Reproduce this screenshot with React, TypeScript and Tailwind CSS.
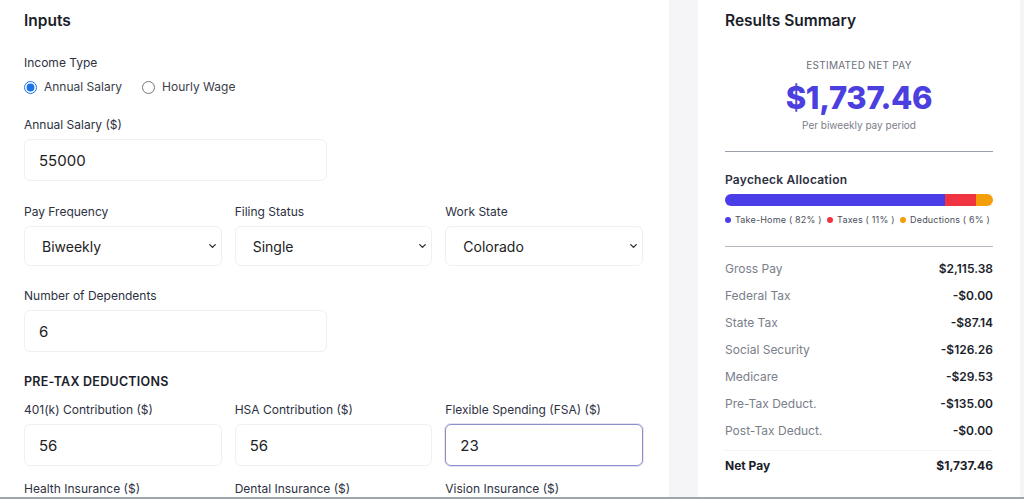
import React, { useState } from 'react';
import { ChevronDown } from 'lucide-react';

const font = { fontFamily: 'Inter, "Noto Sans", sans-serif' };

function Field({ label, value, focused }: { label: string; value: string; focused?: boolean }) {
  return (
    <div className="flex flex-col">
      <label className="text-[12px] text-[#2d3142] mb-[6px] leading-4">{label}</label>
      <input
        defaultValue={value}
        className={
          'h-[42px] rounded-md px-[14px] text-[15px] text-[#222] bg-white outline-none ' +
          (focused
            ? 'border border-[#8f8fcc] shadow-[0_0_0_1px_rgba(143,143,204,0.25)]'
            : 'border border-[#eef0f4]')
        }
      />
    </div>
  );
}

function SelectField({ label, value, options }: { label: string; value: string; options: string[] }) {
  return (
    <div className="flex flex-col">
      <label className="text-[12px] text-[#2d3142] mb-[6px] leading-4">{label}</label>
      <div className="relative">
        <select
          defaultValue={value}
          className="appearance-none w-full h-[40px] rounded-md border border-[#eef0f4] bg-white pl-[17px] pr-8 text-[14px] text-[#222] outline-none"
        >
          {options.map((o) => (
            <option key={o}>{o}</option>
          ))}
        </select>
        <ChevronDown className="absolute right-[4px] top-1/2 -translate-y-1/2 h-[11px] w-[11px] text-[#333] pointer-events-none" strokeWidth={3} />
      </div>
    </div>
  );
}

const rows = [
  ['Gross Pay', '$2,115.38'],
  ['Federal Tax', '-$0.00'],
  ['State Tax', '-$87.14'],
  ['Social Security', '-$126.26'],
  ['Medicare', '-$29.53'],
  ['Pre-Tax Deduct.', '-$135.00'],
  ['Post-Tax Deduct.', '-$0.00'],
];

export default function App() {
  const [income, setIncome] = useState('annual');

  return (
    <div style={font} className="h-[499px] w-[1024px] overflow-hidden bg-[#f5f5f7] flex border-b-2 border-[#a0a4ab]">
      {/* Inputs panel */}
      <div className="w-[669px] bg-white pl-6 pr-[26px] pt-[11px] shrink-0">
        <h2 className="text-[15.5px] font-semibold text-[#1b1e2b] leading-5">Inputs</h2>

        <div className="mt-[24px]">
          <div className="text-[12px] text-[#2d3142] leading-4">Income Type</div>
          <div className="flex items-center gap-[20px] mt-[7px]">
            <label className="flex items-center gap-[7px] text-[12px] text-[#3a3d4a]">
              <input
                type="radio"
                name="income"
                checked={income === 'annual'}
                onChange={() => setIncome('annual')}
                className="h-[13px] w-[13px] m-0 accent-[#1a73e8]"
              />
              Annual Salary
            </label>
            <label className="flex items-center gap-[7px] text-[12px] text-[#3a3d4a]">
              <input
                type="radio"
                name="income"
                checked={income === 'hourly'}
                onChange={() => setIncome('hourly')}
                className="h-[13px] w-[13px] m-0 accent-[#1a73e8]"
              />
              Hourly Wage
            </label>
          </div>
        </div>

        <div className="mt-[21px] grid grid-cols-2 gap-x-[13px]">
          <Field label="Annual Salary ($)" value="55000" />
        </div>

        <div className="mt-[23px] grid grid-cols-3 gap-x-[13px]">
          <SelectField label="Pay Frequency" value="Biweekly" options={['Weekly', 'Biweekly', 'Semi-monthly', 'Monthly']} />
          <SelectField label="Filing Status" value="Single" options={['Single', 'Married Filing Jointly', 'Head of Household']} />
          <SelectField label="Work State" value="Colorado" options={['California', 'Colorado', 'Texas', 'New York']} />
        </div>

        <div className="mt-[22px] grid grid-cols-2 gap-x-[13px]">
          <Field label="Number of Dependents" value="6" />
        </div>

        <div className="mt-[22px] text-[12.5px] font-semibold text-[#1b1e2b] tracking-[0.02em] leading-4">PRE-TAX DEDUCTIONS</div>

        <div className="mt-[12px] grid grid-cols-3 gap-x-[13px]">
          <Field label="401(k) Contribution ($)" value="56" />
          <Field label="HSA Contribution ($)" value="56" />
          <Field label="Flexible Spending (FSA) ($)" value="23" focused />
        </div>

        <div className="mt-[15px] grid grid-cols-3 gap-x-[13px]">
          <Field label="Health Insurance ($)" value="" />
          <Field label="Dental Insurance ($)" value="" />
          <Field label="Vision Insurance ($)" value="" />
        </div>
      </div>

      {/* Results panel */}
      <div className="ml-[29px] w-[322px] shrink-0 bg-white pl-[27px] pr-[27px] pt-[11px]">
        <h2 className="text-[15.5px] font-semibold text-[#1b1e2b] leading-5">Results Summary</h2>

        <div className="mt-[26px] flex flex-col items-center">
          <div className="text-[10px] text-[#6b6f7b] tracking-[0.03em] leading-4">ESTIMATED NET PAY</div>
          <div className="text-[31px] font-extrabold text-[#4b3fe0] leading-[40px] mt-[5px] tracking-[-0.01em]">$1,737.46</div>
          <div className="text-[10px] text-[#7a7e89] leading-4 -mt-[1px]">Per biweekly pay period</div>
        </div>

        <div className="mt-[18px] border-t border-[#9aa0a8]" />

        <div className="mt-[20px]">
          <div className="text-[12px] font-semibold text-[#2d3142] leading-4 tracking-[0.02em]">Paycheck Allocation</div>
          <div className="mt-[6px] flex h-[12px] rounded-full overflow-hidden">
            <div className="bg-[#4b3ee8] w-[82%]" />
            <div className="bg-[#ef3340] w-[11.5%]" />
            <div className="bg-[#f59e0b] flex-1" />
          </div>
          <div className="mt-[8px] flex items-center justify-between pr-[3px] text-[9px] text-[#4a4e5a] leading-3 tracking-[0.02em] whitespace-nowrap">
            <span className="flex items-center gap-[4px]">
              <span className="h-[6px] w-[6px] rounded-full bg-[#4b3ee8]" />
              Take-Home ( 82% )
            </span>
            <span className="flex items-center gap-[4px]">
              <span className="h-[6px] w-[6px] rounded-full bg-[#ef3340]" />
              Taxes ( 11% )
            </span>
            <span className="flex items-center gap-[4px]">
              <span className="h-[6px] w-[6px] rounded-full bg-[#f59e0b]" />
              Deductions ( 6% )
            </span>
          </div>
        </div>

        <div className="mt-[20px] border-t border-[#b4b8bf]" />

        <div className="mt-[8px] flex flex-col">
          {rows.map(([k, v]) => (
            <div key={k} className="flex justify-between h-[27px] items-center text-[12px]">
              <span className="text-[#7a7e89]">{k}</span>
              <span className="font-semibold text-[#1b1e2b]">{v}</span>
            </div>
          ))}
          <div className="mt-[6px] border-t border-[#f2f3f5]" />
          <div className="flex justify-between h-[30px] items-center text-[12px] font-bold text-[#1b1e2b]">
            <span>Net Pay</span>
            <span>$1,737.46</span>
          </div>
        </div>
      </div>
    </div>
  );
}
